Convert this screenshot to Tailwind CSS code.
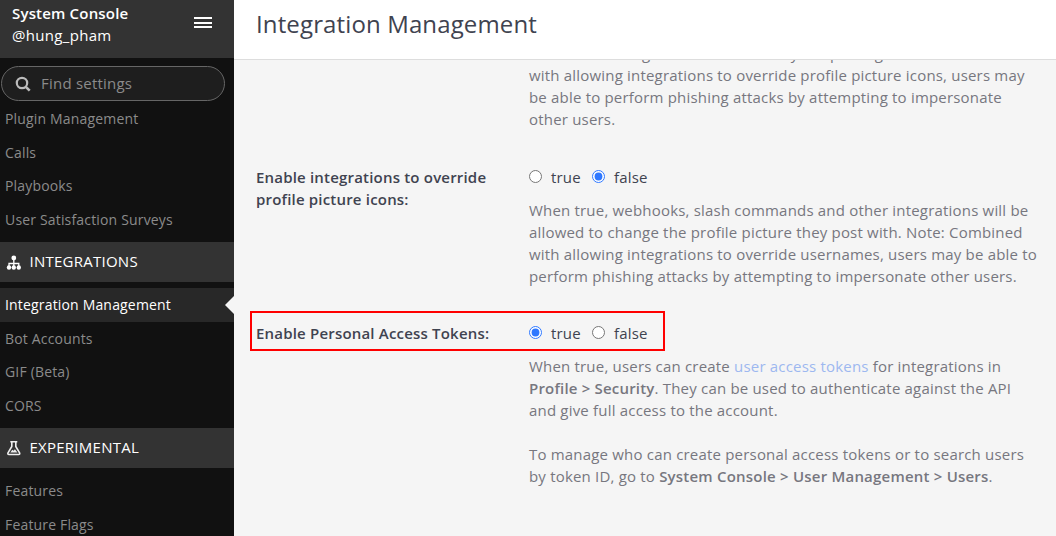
<!DOCTYPE html>
<html lang="en">
<head>
<meta charset="utf-8">
<title>System Console</title>
<script src="https://cdn.jsdelivr.net/npm/@tailwindcss/browser@4"></script>
</head>
<body class="flex h-[536px] w-[1056px] overflow-hidden bg-[#f5f5f5] font-['Open_Sans',sans-serif]">
<aside class="flex h-[536px] w-[234px] shrink-0 flex-col overflow-hidden bg-[#111] text-[14px] text-[#8b8b8b]">
  <header class="flex h-[58px] shrink-0 items-start justify-between bg-[#333] pr-[22px] pl-3 text-white">
    <div class="pt-[2px] text-[15px] leading-[22px] whitespace-nowrap">
      <div class="font-semibold tracking-[0.18px]">System Console</div>
      <div class="tracking-[0.32px]">@hung_pham</div>
    </div>
    <svg class="mt-[17px]" width="18" height="11" viewBox="0 0 18 11" fill="#fff" shape-rendering="crispEdges"><path d="M0 0h18v2H0zM0 5h18v2H0zM0 9h18v2H0z"/></svg>
  </header>
  <div class="mt-2 ml-px flex h-[35px] w-[224px] shrink-0 items-center rounded-full border border-[#666] bg-[#1e1e1e] pl-[13px] text-[15px]">
    <svg width="16" height="16" viewBox="0 0 16 16" fill="none" stroke="#bbb" stroke-width="2.2"><circle cx="7" cy="7" r="5.2"/><path d="M10.800 10.800l3.900 3.900" stroke-width="2.6"/></svg>
    <span class="ml-[10px] tracking-[0.22px]">Find settings</span>
  </div>
  <nav class="flex flex-col pt-px whitespace-nowrap">
    <div class="flex flex-col leading-[33.7px] tracking-[0.17px] *:pl-[5px]">
      <div>Plugin Management</div><div>Calls</div><div>Playbooks</div><div>User Satisfaction Surveys</div>
    </div>
    <div class="mt-[5.2px] flex h-10 items-center bg-[#333] pl-[6px] text-[15px] text-white">
      <svg class="mt-px" width="16" height="16" viewBox="0 0 16 16" fill="#fff"><circle cx="7.800" cy="3" r="2.4"/><circle cx="3" cy="12.500" r="2.2"/><circle cx="7.800" cy="12.500" r="2.2"/><circle cx="12.800" cy="12.500" r="2.2"/><path d="M7.800 4v8M3 12V8.500h9.800V12" fill="none" stroke="#fff" stroke-width="1.3"/></svg>
      <span class="-mt-[2px] ml-[7.5px] tracking-[0.25px]">INTEGRATIONS</span>
    </div>
    <div class="mt-[6px] flex flex-col leading-[33.7px] tracking-[0.17px] *:pl-[5px]">
      <div class="flex items-center justify-between bg-[#282828] text-white"><span>Integration Management</span><svg width="9" height="18" viewBox="0 0 9 18"><path d="M9 0L0 9l9 9z" fill="#f5f5f5"/></svg></div>
      <div>Bot Accounts</div><div>GIF (Beta)</div><div>CORS</div>
    </div>
    <div class="mt-[5.2px] flex h-10 items-center bg-[#333] pl-[6px] text-[15px] text-white">
      <svg class="-mt-px" width="16" height="16" viewBox="0 0 16 16" fill="none" stroke="#eee" stroke-width="1.6" stroke-linejoin="round"><path d="M4.300 1.800h7M5.800 1.800v4.700L2 12.800q-.6 1.700 1 1.700h9.600q1.600 0 1-1.700L9.800 6.500V1.800"/><path d="M4.300 12.500l2-2.700 1.300 1 1.300-1.500 2.500 3.200z" fill="#eee" stroke="none"/></svg>
      <span class="-mt-[2px] ml-[7.5px] tracking-[0.25px]">EXPERIMENTAL</span>
    </div>
    <div class="mt-[6px] flex flex-col leading-[33.75px] tracking-[0.17px] *:pl-[5px]">
      <div>Features</div><div>Feature Flags</div>
    </div>
  </nav>
</aside>
<main class="flex h-[536px] min-w-0 flex-1 flex-col overflow-hidden text-[15px] leading-[22px] whitespace-nowrap text-[#3f4350]">
  <header class="h-[60px] shrink-0 border-b border-[#ddd] bg-white pl-[22px] text-[24px] leading-[48px] tracking-[0.13px]"><h1>Integration Management</h1></header>
  <div class="relative flex min-h-0 flex-1 flex-col overflow-hidden pl-[22px] tracking-[0.19px]">
    <div class="-mt-[18px] flex shrink-0 flex-col pl-[273px] text-[#77777f]">
      <p>allowed to change the username they are posting as. Note: Combined</p>
      <p>with allowing integrations to override profile picture icons, users may</p>
      <p>be able to perform phishing attacks by attempting to impersonate</p>
      <p>other users.</p>
    </div>
    <div class="mt-9 flex">
      <div class="w-[273px] shrink-0 font-semibold"><p>Enable integrations to override</p><p>profile picture icons:</p></div>
      <div>
        <div class="flex items-center">
          <input type="radio" name="icons" class="-mt-px size-[13px] accent-[#2f78ff]"><span class="ml-[9px] w-[41px]">true</span>
          <input type="radio" name="icons" checked class="-mt-px size-[13px] accent-[#2f78ff]"><span class="ml-[9px]">false</span>
        </div>
        <div class="mt-[11px] text-[#77777f]">
          <p>When true, webhooks, slash commands and other integrations will be</p>
          <p>allowed to change the profile picture they post with. Note: Combined</p>
          <p>with allowing integrations to override usernames, users may be able to</p>
          <p>perform phishing attacks by attempting to impersonate other users.</p>
        </div>
      </div>
    </div>
    <div class="mt-[35px] flex">
      <div class="w-[273px] shrink-0 font-semibold">Enable Personal Access Tokens:</div>
      <div>
        <div class="flex items-center">
          <input type="radio" name="tokens" checked class="-mt-px size-[13px] accent-[#2f78ff]"><span class="ml-[9px] w-[41px]">true</span>
          <input type="radio" name="tokens" class="-mt-px size-[13px] accent-[#2f78ff]"><span class="ml-[9px]">false</span>
        </div>
        <div class="mt-[11px] text-[#77777f]">
          <p>When true, users can create <a class="text-[#9db8f0]">user access tokens</a> for integrations in</p>
          <p><b class="font-semibold">Profile &gt; Security</b>. They can be used to authenticate against the API</p>
          <p>and give full access to the account.</p>
          <p class="mt-[22px]">To manage who can create personal access tokens or to search users</p>
          <p>by token ID, go to <b class="font-semibold tracking-[0.21px]">System Console &gt; User Management &gt; Users</b>.</p>
        </div>
      </div>
    </div>
    <div class="absolute top-[251px] left-4 h-10 w-[415px] border-2 border-[#f00]"></div>
  </div>
</main>
</body>
</html>
